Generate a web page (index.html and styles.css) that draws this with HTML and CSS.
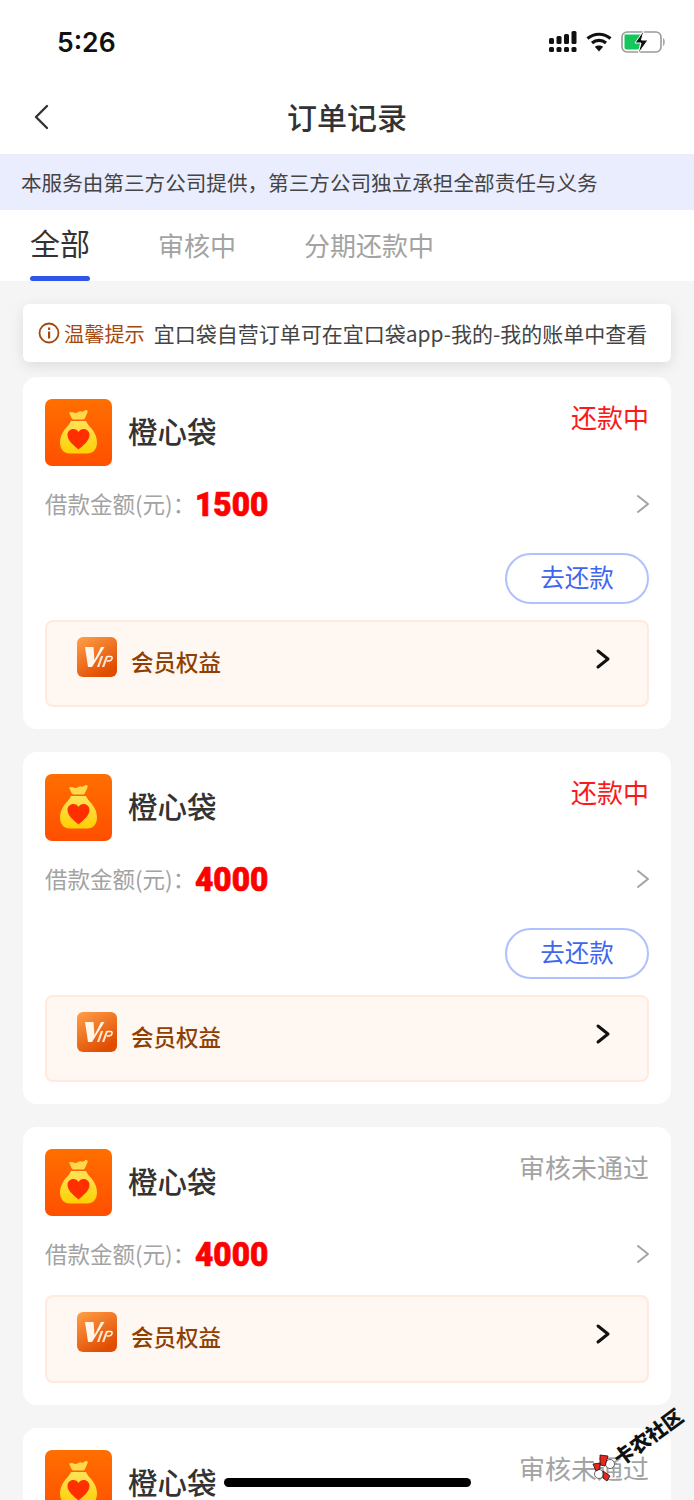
FILE: index.html
```html
<!DOCTYPE html>
<html lang="zh-CN">
<head>
<meta charset="utf-8">
<title>订单记录</title>
<link rel="stylesheet" href="styles.css">
</head>
<body>
<svg class="defs" width="0" height="0" aria-hidden="true">
  <defs>
    <linearGradient id="bagBg" x1="0" y1="0" x2="0" y2="1"><stop offset="0" stop-color="#ff6f00"/><stop offset="1" stop-color="#ff4f00"/></linearGradient>
    <linearGradient id="bagFill" x1="0" y1="0" x2="0" y2="1"><stop offset="0" stop-color="#ffe35a"/><stop offset="1" stop-color="#ffd000"/></linearGradient>
    <linearGradient id="vipBg" x1="0" y1="0" x2="0.6" y2="1"><stop offset="0" stop-color="#ffa04a"/><stop offset="1" stop-color="#e04c00"/></linearGradient>
    <symbol id="bag" viewBox="0 0 67 67">
      <rect width="67" height="67" rx="7" fill="url(#bagBg)"/>
      <path d="M24 13.500c3-1.500 5 .5 7 .5 2-.5 3.500-2.500 5.500-1.500 1 .5 2 0 4-1.500 2-.5 2.500 1 2 2.500l-2.500 5.500c-.5 1-1 1.500-2.500 1.500h-8c-1.500 0-2-.5-3-1.500z" fill="#ffd94a"/>
      <path d="M26 22h15c1 3 3.500 5 6 8 3.500 4.500 5 9 5 13.500 0 6.500-3.500 11-10 11H25c-6.500 0-10-4.500-10-11 0-4.500 1.500-9 5-13.500 2.500-3 5-5 6-8z" fill="url(#bagFill)"/>
      <path d="M33.500 50.500c-3-3-11-8-11-14.500 0-3.500 2.700-6 5.800-6 2.300 0 4.200 1.200 5.200 3 1-1.800 2.900-3 5.200-3 3.100 0 5.800 2.500 5.800 6 0 6.500-8 11.500-11 14.500z" fill="#ff2f00"/>
    </symbol>
    <symbol id="vip" viewBox="0 0 40 40">
      <rect width="40" height="40" rx="6" fill="url(#vipBg)"/>
      <path d="M8 10h8.500l1 13L24 10h3.500L15 30H11z" fill="#fff5e8"/>
      <path d="M20 30l4-11h2.200l-4 11zM25 30l4-11h2.200l-4 11z" fill="#fff5e8" opacity=".9"/>
      <path d="M30 19.500h3.500c1.500 0 2 1 1.500 2.200-.5 1.500-1.600 2.300-3 2.300h-2.300" fill="none" stroke="#fff5e8" stroke-width="1.500"/>
    </symbol>
    <symbol id="chev" viewBox="0 0 20 24">
      <path d="M5 4l10 8-10 8" fill="none" stroke="currentColor" stroke-linecap="round" stroke-linejoin="round"/>
    </symbol>
  </defs>
</svg>

<div class="phone">
  <header class="status">
    <span class="clock">5:26</span>
    <div class="status-icons">
      <svg class="signal" width="28" height="22" viewBox="0 0 28 22">
        <g fill="#111">
          <rect x="0" y="7" width="5" height="6" rx="1.500"/><rect x="7.500" y="5" width="5" height="8" rx="1.500"/><rect x="15" y="3" width="5" height="10" rx="1.500"/><rect x="22.500" y="0" width="5" height="13" rx="1.500"/>
          <rect x="0" y="16" width="5" height="5" rx="1.500"/><rect x="7.500" y="16" width="5" height="5" rx="1.500"/><rect x="15" y="16" width="5" height="5" rx="1.500"/><rect x="22.500" y="16" width="5" height="5" rx="1.500"/>
        </g>
      </svg>
      <svg class="wifi" width="26" height="20" viewBox="0 0 26 20">
        <g fill="none" stroke="#111" stroke-width="3.200" stroke-linecap="butt">
          <path d="M1.500 6.500C8 .8 18 .8 24.500 6.500"/>
          <path d="M6 11c4-3.400 10-3.400 14 0"/>
        </g>
        <path d="M13 19.500l-4.200-4.700c2.400-1.900 6-1.900 8.400 0z" fill="#111"/>
      </svg>
      <svg class="battery" width="44" height="24" viewBox="0 0 44 24">
        <rect x="1" y="2" width="39" height="20" rx="5" fill="#fff" stroke="#9a9a9a" stroke-width="1.600"/>
        <path d="M3.500 4.500H20l-4 8h3.500l-2 7H5.500a2 2 0 0 1-2-2z" fill="#14c75a"/>
        <path d="M23 0l-9 13h6l-3 11 10-14h-6.500z" fill="#111" stroke="#fff" stroke-width="1"/>
        <path d="M42 8c1.200.5 1.800 2.400 1.800 4s-.6 3.500-1.800 4z" fill="#a8a8a8"/>
      </svg>
    </div>
  </header>

  <nav class="navbar">
    <svg class="back" width="18" height="26" viewBox="0 0 18 26"><path d="M15 2L4 13l11 11" fill="none" stroke="#333" stroke-width="2.400" stroke-linecap="round" stroke-linejoin="round"/></svg>
    <h1 class="title">订单记录</h1>
  </nav>

  <div class="notice">本服务由第三方公司提供，第三方公司独立承担全部责任与义务</div>

  <div class="tabs">
    <div class="tab tab-active">全部</div>
    <div class="tab">审核中</div>
    <div class="tab">分期还款中</div>
  </div>

  <main class="content">
    <div class="hint">
      <svg class="hint-icon" width="22" height="22" viewBox="0 0 22 22"><circle cx="11" cy="11" r="9.500" fill="none" stroke="#a5480f" stroke-width="1.800"/><rect x="10" y="9.500" width="2.200" height="7" fill="#a5480f"/><rect x="10" y="5.500" width="2.200" height="2.400" fill="#a5480f"/></svg>
      <span class="hint-label">温馨提示</span>
      <span class="hint-text">宜口袋自营订单可在宜口袋app-我的-我的账单中查看</span>
    </div>

    <article class="card">
      <div class="card-head">
        <svg class="logo"><use href="#bag"/></svg>
        <span class="name">橙心袋</span>
        <span class="state state-red">还款中</span>
      </div>
      <div class="amount-row">
        <span class="amount-label">借款金额(元)：</span>
        <span class="amount">1500</span>
        <svg class="arrow"><use href="#chev"/></svg>
      </div>
      <div class="actions"><span class="pay">去还款</span></div>
      <div class="vip">
        <svg class="vip-icon"><use href="#vip"/></svg>
        <span class="vip-text">会员权益</span>
        <svg class="vip-arrow"><use href="#chev"/></svg>
      </div>
    </article>

    <article class="card">
      <div class="card-head">
        <svg class="logo"><use href="#bag"/></svg>
        <span class="name">橙心袋</span>
        <span class="state state-red">还款中</span>
      </div>
      <div class="amount-row">
        <span class="amount-label">借款金额(元)：</span>
        <span class="amount">4000</span>
        <svg class="arrow"><use href="#chev"/></svg>
      </div>
      <div class="actions"><span class="pay">去还款</span></div>
      <div class="vip">
        <svg class="vip-icon"><use href="#vip"/></svg>
        <span class="vip-text">会员权益</span>
        <svg class="vip-arrow"><use href="#chev"/></svg>
      </div>
    </article>

    <article class="card">
      <div class="card-head">
        <svg class="logo"><use href="#bag"/></svg>
        <span class="name">橙心袋</span>
        <span class="state">审核未通过</span>
      </div>
      <div class="amount-row">
        <span class="amount-label">借款金额(元)：</span>
        <span class="amount">4000</span>
        <svg class="arrow"><use href="#chev"/></svg>
      </div>
      <div class="vip vip-tight">
        <svg class="vip-icon"><use href="#vip"/></svg>
        <span class="vip-text">会员权益</span>
        <svg class="vip-arrow"><use href="#chev"/></svg>
      </div>
    </article>

    <article class="card">
      <div class="card-head">
        <svg class="logo"><use href="#bag"/></svg>
        <span class="name">橙心袋</span>
        <span class="state">审核未通过</span>
      </div>
    </article>
  </main>

  <div class="home-bar"></div>
  <div class="watermark">
    <svg class="wm-bow" width="26" height="30" viewBox="0 0 26 30">
      <circle cx="7" cy="21" r="4.500" fill="#fff" stroke="#666" stroke-width="1"/>
      <circle cx="18" cy="11" r="4.500" fill="#fff" stroke="#666" stroke-width="1"/>
      <g fill="#e6281e" stroke="#111" stroke-width=".8">
        <path d="M8 2l8 1-3 10-5-1z"/>
        <path d="M1 11l7-1v6l-4 2z"/>
        <path d="M11 18l7 5-3 5-4-3z"/>
      </g>
    </svg>
    <span class="wm-text">卡农社区</span>
  </div>
</div>
</body>
</html>
```
FILE: styles.css
```css
* { box-sizing: border-box; }
html, body { margin: 0; padding: 0; }
body {
  width: 694px;
  height: 1500px;
  overflow: hidden;
  background: #f5f5f5;
  font-family: "Noto Sans CJK SC", "Liberation Sans", sans-serif;
  color: #333;
}
.defs { position: absolute; }
.phone { position: relative; width: 694px; height: 1500px; overflow: hidden; }

.status {
  height: 78px;
  background: #fff;
  display: flex;
  align-items: center;
  justify-content: space-between;
  padding: 5px 29px 0 57px;
}
.clock { font-family: Inter, "Liberation Sans", sans-serif; font-size: 26.500px; font-weight: 600; color: #111; }
.status-icons { display: flex; align-items: center; gap: 9px; }

.navbar {
  position: relative;
  height: 76px;
  background: #fff;
  display: flex;
  align-items: center;
  justify-content: center;
}
.back { position: absolute; left: 32px; top: 26px; }
.title { margin: 0; font-size: 30px; font-weight: 500; color: #333; line-height: 76px; }

.notice {
  height: 56px;
  background: #e9edfd;
  padding-left: 21px;
  font-size: 20.6px;
  line-height: 56px;
  color: #444;
}

.tabs {
  height: 71px;
  background: #fff;
  display: flex;
  padding-left: 30px;
  gap: 68px;
}
.tab { font-size: 26px; line-height: 70px; color: #a3a3a3; }
.tab-active {
  position: relative;
  font-size: 30px;
  line-height: 64px;
  color: #333;
}
.tab-active::after {
  content: "";
  position: absolute;
  left: 0;
  right: 0;
  bottom: 0;
  height: 5px;
  border-radius: 3px;
  background: #2f55eb;
}

.content {
  display: flex;
  flex-direction: column;
  gap: 23px;
  padding: 23px 23px 0;
}
.hint {
  height: 58px;
  margin-bottom: -8px;
  background: #fff;
  border-radius: 6px;
  box-shadow: 0 4px 14px rgba(0, 0, 0, .1);
  display: flex;
  align-items: center;
  padding-left: 15px;
  position: relative;
}
.hint-icon { flex: none; }
.hint-label { margin-left: 4px; font-size: 20.2px; color: #a5480f; }
.hint-text { margin-left: 9px; font-size: 21px; color: #444; white-space: nowrap; }

.card {
  background: #fff;
  border-radius: 14px;
  padding: 22px 22px 22px;
}
.card-head { position: relative; display: flex; align-items: center; height: 67px; }
.logo { width: 67px; height: 67px; flex: none; }
.name { margin: -6px 0 0 16px; font-size: 29.500px; font-weight: 500; color: #333; }
.state { position: absolute; right: 0; top: 0; font-size: 26px; line-height: 36px; color: #a3a3a3; }
.state-red { color: #fb1a1a; }

.amount-row { position: relative; display: flex; align-items: center; height: 40px; margin-top: 18px; }
.amount-label { width: 150px; margin-top: -2px; font-size: 22.500px; color: #a3a3a3; white-space: nowrap; }
.amount {
  display: inline-block;
  font-family: Roboto, "Liberation Sans", sans-serif;
  font-size: 34px;
  font-weight: 900;
  color: #ff0000;
  transform: scaleX(.93);
  transform-origin: left center;
  -webkit-text-stroke: .7px #ff0000;
}
.arrow { position: absolute; right: -4px; top: 8px; width: 20px; height: 24px; color: #a3a3a3; stroke-width: 2; }

.actions { display: flex; justify-content: flex-end; margin-top: 29px; }
.pay {
  width: 144px;
  height: 51px;
  border: 2px solid #b0c1fb;
  border-radius: 26px;
  font-size: 24.500px;
  line-height: 43px;
  text-align: center;
  color: #3f66ef;
}
.vip {
  position: relative;
  display: flex;
  align-items: center;
  height: 87px;
  margin-top: 16px;
  padding-left: 30px;
  background: #fff7f1;
  border: 2px solid #ffeadd;
  border-radius: 8px;
}
.vip-tight { margin-top: 21px; height: 88px; }
.vip-icon { width: 40px; height: 40px; flex: none; margin-top: -14px; }
.vip-text { margin: -6px 0 0 14px; font-size: 22.500px; font-weight: 500; color: #8f3f03; }
.vip-arrow { position: absolute; right: 34px; top: 25px; width: 20px; height: 24px; color: #111; stroke-width: 3; }

.home-bar {
  position: absolute;
  left: 224px;
  top: 1478px;
  width: 247px;
  height: 9px;
  border-radius: 5px;
  background: #000;
}
.watermark {
  position: absolute;
  left: 592px;
  top: 1453px;
  display: flex;
  align-items: center;
  transform: rotate(-36deg);
  transform-origin: 13px 15px;
  white-space: nowrap;
}
.wm-bow { transform: rotate(36deg); flex: none; }
.wm-text { margin-left: 0; font-size: 20px; font-weight: 900; color: #111; line-height: 1; }
```
